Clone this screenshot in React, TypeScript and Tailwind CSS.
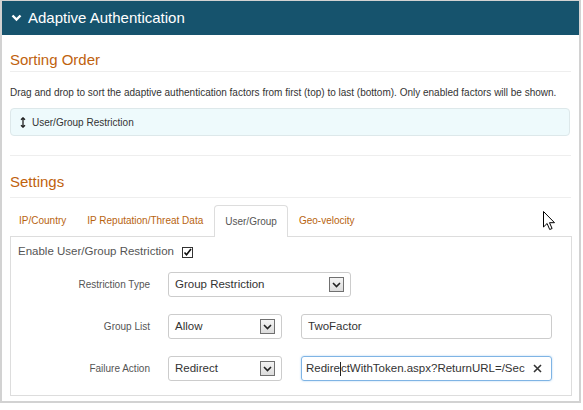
import React from "react";

const tabs = ["IP/Country", "IP Reputation/Threat Data", "User/Group", "Geo-velocity"];

// little square arrow box used by the dropdowns
const SelectArrow = () => (
  <span className="flex h-[15px] w-[15px] items-center justify-center border border-[#707070] bg-gradient-to-b from-[#f4f4f4] to-[#dcdcdc]">
    <svg width="9" height="6" viewBox="0 0 9 6">
      <path d="M1 1l3.5 3.5L8 1" fill="none" stroke="#222" strokeWidth="1.6" />
    </svg>
  </span>
);

type SelectProps = {
  value: string;
  width: string;
};

const FakeSelect: React.FC<SelectProps> = ({ value, width }) => (
  <div
    className={`${width} flex h-[25px] items-center justify-between rounded-[3px] border border-[#cccccc] bg-white pl-[6px] pr-[6px] text-[11.5px] text-[#333]`}
  >
    <span>{value}</span>
    <SelectArrow />
  </div>
);

const Row: React.FC<{ label: string; children: React.ReactNode }> = ({ label, children }) => (
  <div className="flex items-center">
    <div className="w-[140px] text-right text-[10px] text-[#555]">{label}</div>
    <div className="ml-[18px] flex items-center gap-[19px]">{children}</div>
  </div>
);

export default function App() {
  return (
    <div className="relative h-[410px] w-[583px] bg-white font-['Liberation_Sans',Arial,sans-serif]">
      <div className="w-[581px] border-2 border-t border-[#d2d2d2]">
        <div className="flex h-[34px] items-center bg-[#16536d] pl-[9px] text-white">
          <svg width="11" height="8" viewBox="0 0 11 8" className="mr-[6px]">
            <path d="M1.5 1.5l4 4 4-4" fill="none" stroke="#fff" strokeWidth="2.4" />
          </svg>
          <span className="text-[15px]">Adaptive Authentication</span>
        </div>

        <div className="px-[8px] pb-[5px]">
          {/* sorting order */}
          <h2 className="mt-[15px] border-b border-[#eeeeee] pb-[2px] text-[15px] leading-[19px] text-[#c0620e]">
            Sorting Order
          </h2>
          <p className="mt-[14px] text-[10px] leading-[14px] text-[#333]">
            Drag and drop to sort the adaptive authentication factors from first (top) to last (bottom). Only enabled factors will be shown.
          </p>
          <div className="mt-[8px] mr-[1px] flex h-[28px] items-center rounded-[4px] border border-[#dde8ea] bg-[#eefafc] pl-[9px] text-[10px] text-[#333]">
            <svg width="6" height="11" viewBox="0 0 6 11" className="mr-[6px]">
              <path d="M3 1v9M1 2.8L3 .8l2 2M1 8.2l2 2 2-2" fill="none" stroke="#222" strokeWidth="1.3" />
            </svg>
            User/Group Restriction
          </div>

          <div className="mt-[19px] border-t border-[#eeeeee]" />

          {/* settings */}
          <h2 className="mt-[16px] border-b border-[#eeeeee] pb-[6px] text-[15px] leading-[19px] text-[#c0620e]">
            Settings
          </h2>

          <div className="ml-[-1px] mt-[6px] flex h-[32px] items-end">
            {tabs.map((t, i) =>
              i === 2 ? (
                <div
                  key={t}
                  className="-mb-px mr-[1px] flex h-[32px] items-center rounded-t-[4px] border border-b-0 border-[#dddddd] bg-white px-[10px] text-[10px] text-[#555]"
                >
                  {t}
                </div>
              ) : (
                <div
                  key={t}
                  className="mr-[1px] flex h-[32px] items-center px-[10px] text-[10px] text-[#b8640f]"
                >
                  {t}
                </div>
              )
            )}
          </div>

          <div className="mr-[-1px] border border-[#dddddd] px-[7px] pt-[6px] pb-[14px]">
            <div className="flex h-[18px] items-center text-[11.5px] text-[#555]">
              Enable User/Group Restriction
              <span className="ml-[8px] flex h-[11px] w-[11px] items-center justify-center border border-[#333] bg-white">
                <svg width="9" height="9" viewBox="0 0 9 9">
                  <path d="M1.5 4.5l2 2.3L8 1" fill="none" stroke="#111" strokeWidth="1.6" />
                </svg>
              </span>
            </div>

            <div className="ml-[-8px] mt-[11px] flex flex-col gap-[17px]">
              <Row label="Restriction Type">
                <FakeSelect value="Group Restriction" width="w-[183px]" />
              </Row>
              <Row label="Group List">
                <FakeSelect value="Allow" width="w-[114px]" />
                <div className="flex h-[25px] w-[251px] items-center rounded-[3px] border border-[#cccccc] pl-[6px] text-[11.5px] text-[#333]">
                  TwoFactor
                </div>
              </Row>
              <Row label="Failure Action">
                <FakeSelect value="Redirect" width="w-[114px]" />
                <div className="flex h-[25px] w-[251px] items-center justify-between rounded-[3px] border border-[#7fb4e4] pl-[4px] pr-[9px] text-[11.5px] text-[#333] shadow-[0_0_2px_rgba(102,175,233,0.6)]">
                  <span className="flex items-center whitespace-nowrap">
                    Redire
                    <span className="h-[14px] w-px bg-[#222]" />
                    ctWithToken.aspx?ReturnURL=/Sec
                  </span>
                  <svg width="9" height="9" viewBox="0 0 9 9">
                    <path d="M1 1l7 7M8 1L1 8" stroke="#333" strokeWidth="1.6" />
                  </svg>
                </div>
              </Row>
            </div>
          </div>
        </div>
      </div>

      {/* mouse pointer */}
      <svg className="absolute left-[543px] top-[211px]" width="14" height="21" viewBox="0 0 14 21">
        <path
          d="M.5.5v15.5l3.6-3.5 2.6 6 2.4-1-2.6-5.8h5z"
          fill="#fff"
          stroke="#000"
          strokeWidth="1"
          strokeLinejoin="round"
        />
      </svg>
    </div>
  );
}
